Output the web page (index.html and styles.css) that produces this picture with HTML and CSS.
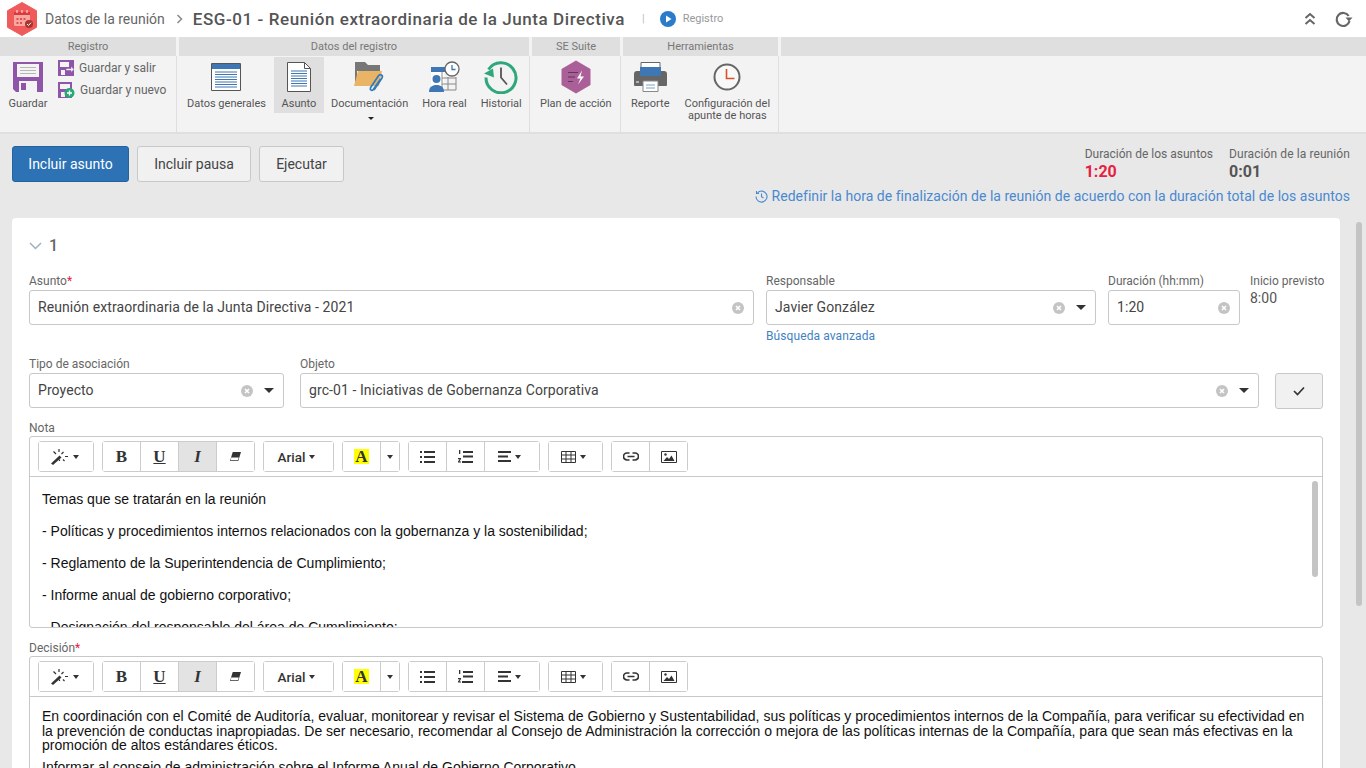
FILE: index.html
```html
<html>
<head>
    <meta charset="utf-8">
    <link rel="stylesheet" href="styles.css">
</head>
<body>
    <svg width="0" height="0" class="defs">
        <symbol id="clear" viewBox="0 0 12 12"><circle cx="6" cy="6" r="6" fill="#c4c4c4"/><path d="M4 4l4 4M8 4l-4 4" stroke="#fff" stroke-width="1.600"/></symbol>
        <symbol id="wand" viewBox="0 0 18 16"><path d="M0 14.500L8.500 6.500l2 2L2 16z" fill="#333"/><path d="M8 0v3M2.500 2.500L5 5M12.500 3L10.500 5M14 7.500h3M8.500 10.500V12M12 10.500l1.500 1.500" stroke="#333" stroke-width="1.200"/></symbol>
        <symbol id="eraser" viewBox="0 0 14 12"><path d="M4 1h9l-3 10H1z" fill="#333"/><path d="M2.400 7h8.200l-1 3H1.700z" fill="#fff"/></symbol>
        <symbol id="ul" viewBox="0 0 15 12"><path d="M0 0h2v2H0zM0 5h2v2H0zM0 10h2v2H0zM4 0h11v2H4zM4 5h11v2H4zM4 10h11v2H4z" fill="#333"/></symbol>
        <symbol id="ol" viewBox="0 0 15 13"><path d="M5 1h10v2H5zM5 5.500h10v2H5zM4 11h11v2H4z" fill="#333"/><path d="M1 0h1.300v4H1zM0 8h3v1L1.500 11.500H3V12.500H0v-1L1.600 9.200H0z" fill="#333"/></symbol>
        <symbol id="align" viewBox="0 0 13 11"><path d="M0 0h13v2H0zM0 4.500h10v2H0zM0 9h13v2H0z" fill="#333"/></symbol>
        <symbol id="table" viewBox="0 0 15 12"><path d="M.5.500h14v11H.5zM.5 4h14M.5 8h14M5 .5v11M10 .5v11" fill="none" stroke="#333"/></symbol>
        <symbol id="link" viewBox="0 0 16 9"><path d="M6.500 1H4a3.500 3.500 0 0 0 0 7h2.500M9.500 1H12a3.500 3.500 0 0 1 0 7H9.500M4.500 4.500h7" fill="none" stroke="#333" stroke-width="1.700"/></symbol>
        <symbol id="image" viewBox="0 0 16 12"><path d="M.5.500h15v11H.5z" fill="none" stroke="#333"/><path d="M2.500 10l3.500-4 2 2 2.500-3.500 3 5.500z" fill="#333"/><circle cx="4.500" cy="3.500" r="1.200" fill="#333"/></symbol>
    </svg>

    <header class="top-bar">
        <svg class="logo" width="30" height="34" viewBox="0 0 30 34">
            <path d="M15 .5l14.500 8.200v16.600L15 33.500.5 25.300V8.700z" fill="#ef5a5a" stroke="#ef5a5a" stroke-linejoin="round"/>
            <rect x="7" y="10" width="16" height="14" rx="1.500" fill="#f7a6a2"/>
            <path d="M7 10h16v3H7z" fill="#d93a3a"/>
            <path d="M10 8v3M15 8v3M20 8v3" stroke="#fbd5d2" stroke-width="1.200"/>
            <path d="M9.500 16h2v2h-2zM13 16h2v2h-2zM16.500 16h2v2h-2zM9.500 20h2v2h-2zM13 20h2v2h-2z" fill="#e2504e"/>
            <circle cx="22" cy="22" r="4" fill="#a8362f"/>
            <path d="M20 22l1.500 1.500 2.500-2.800" stroke="#fff" fill="none" stroke-width="1"/>
        </svg>
        <span class="crumb">Datos de la reunión</span>
        <svg class="crumb-sep" width="7" height="10" viewBox="0 0 7 10"><path d="M1.500 1l4 4-4 4" fill="none" stroke="#8a8a8a" stroke-width="1.500"/></svg>
        <h1 class="page-title">ESG-01 - Reunión extraordinaria de la Junta Directiva</h1>
        <span class="title-sep">|</span>
        <svg class="status-icon" width="16" height="16" viewBox="0 0 16 16"><circle cx="8" cy="8" r="8" fill="#2b7bcb"/><path d="M6 4.500l5.500 3.500L6 11.500z" fill="#fff"/></svg>
        <span class="status-text">Registro</span>
        <div class="top-actions">
            <svg width="12" height="14" viewBox="0 0 12 14"><path d="M1.500 6l4.500-4 4.500 4M1.500 12l4.500-4 4.500 4" fill="none" stroke="#666" stroke-width="2"/></svg>
            <svg width="19" height="18" viewBox="0 0 19 18"><path d="M15.500 11a6.500 6.500 0 1 1-.8-5" fill="none" stroke="#666" stroke-width="2.200"/><path d="M11.500 7.500h7L15 11.500z" fill="#666"/></svg>
        </div>
    </header>

    <nav class="ribbon">
        <section class="ribbon-group group-registro">
            <div class="group-title">Registro</div>
            <div class="group-body">
                <div class="ribbon-item item-save">
                    <svg width="30" height="30" viewBox="0 0 30 30"><path d="M0 0h30v30H3l-3-3z" fill="#8e55a8"/><path d="M4 2h22v13H4z" fill="#f3f3f3"/><path d="M7 5.500h16M7 8.500h16M7 11.500h16" stroke="#b8b8b8"/><path d="M6 19h18v11H6z" fill="#f3f3f3"/><path d="M8 21h5v7H8z" fill="#8e55a8"/></svg>
                    <span>Guardar</span>
                </div>
                <div class="save-links">
                    <div class="save-link">
                        <svg width="16" height="16" viewBox="0 0 16 16"><path d="M0 0h16v16H0z" fill="#8e55a8"/><path d="M2 2h9v5H2zM3 10h4v5H3z" fill="#f3f3f3"/><path d="M8 8.500h5V6l3 3.500-3 3V10.500H8z" fill="#f3f3f3" stroke="#8e55a8" stroke-width=".6"/></svg>
                        <span>Guardar y salir</span>
                    </div>
                    <div class="save-link">
                        <svg width="17" height="16" viewBox="0 0 17 16"><path d="M0 0h14v16H0z" fill="#8e55a8"/><path d="M2 2h10v5H2zM3 10h4v5H3z" fill="#f3f3f3"/><circle cx="11.500" cy="11" r="5" fill="#2aa876"/><path d="M9 11h5M11.500 8.500v5" stroke="#fff" stroke-width="1.300"/></svg>
                        <span>Guardar y nuevo</span>
                    </div>
                </div>
            </div>
        </section>

        <section class="ribbon-group group-datos">
            <div class="group-title">Datos del registro</div>
            <div class="group-body">
                <div class="ribbon-item">
                    <svg width="30" height="28" viewBox="0 0 30 28"><path d="M.5.500h29v27H.5z" fill="#fff" stroke="#555"/><path d="M1 1h28v5H1z" fill="#3f77b5"/><path d="M4 9h22M4 11.500h22M4 14h22M4 16.500h22M4 19h22M4 21.500h22M4 24h22" stroke="#3f77b5"/></svg>
                    <span>Datos generales</span>
                </div>
                <div class="ribbon-item is-active">
                    <svg width="24" height="30" viewBox="0 0 24 30"><path d="M.5.500h17l6 6v23H.5z" fill="#fff" stroke="#555"/><path d="M17.500.5v6h6" fill="none" stroke="#555"/><path d="M4 9h16M4 11.500h16M4 14h16M4 16.500h16M4 19h16M4 21.500h16M4 24h16" stroke="#3f77b5"/></svg>
                    <span>Asunto</span>
                </div>
                <div class="ribbon-item item-doc">
                    <svg width="32" height="30" viewBox="0 0 32 30"><path d="M1 0h10l3 3h12v6H1z" fill="#777"/><path d="M1 2v22h2V2z" fill="#777"/><path d="M4 9h24l-3 15H0z" fill="#e9b466"/><path d="M20 28l8-12c1.500-2.500-2-4.500-3.500-2.200l-8 12c-1 2 1.500 3.400 2.800 1.600l7.300-10.500" fill="none" stroke="#2f7bbf" stroke-width="1.700"/></svg>
                    <span>Documentación</span>
                    <i class="caret caret-dark item-caret"></i>
                </div>
                <div class="ribbon-item item-tight">
                    <svg width="32" height="32" viewBox="0 0 32 32"><path d="M3 6h13v23H3z" fill="#fff"/><path d="M3 6h16v5H3z" fill="#3f77b5"/><path d="M14 11v18M20 16v13M14 17h14M14 23h14M14 29h14M28 16v13" stroke="#888"/><circle cx="24" cy="8" r="7" fill="#fff" stroke="#666" stroke-width="1.300"/><path d="M24 4v4.500h3.500" fill="none" stroke="#3f77b5" stroke-width="1.300"/><circle cx="8.500" cy="18" r="4" fill="#3f77b5"/><path d="M1 31c0-5 3-7 7.500-7s7.500 2 7.500 7z" fill="#3f77b5"/></svg>
                    <span>Hora real</span>
                </div>
                <div class="ribbon-item item-tight">
                    <svg width="34" height="33" viewBox="0 0 34 33"><path d="M4.500 9A15 15 0 1 1 2 17" fill="none" stroke="#2ea87b" stroke-width="3"/><path d="M0 13l9-5 1 9z" fill="#2ea87b"/><path d="M17 7v10l6 7" fill="none" stroke="#555" stroke-width="1.800"/></svg>
                    <span>Historial</span>
                </div>
            </div>
        </section>

        <section class="ribbon-group group-suite">
            <div class="group-title">SE Suite</div>
            <div class="group-body">
                <div class="ribbon-item">
                    <svg width="30" height="33" viewBox="0 0 30 33"><path d="M15 0l14.500 8.500v16L15 33 .5 24.500v-16z" fill="#ab5f98"/><path d="M7 12h10M7 16.500h7M7 21h5" stroke="#5d3a57" stroke-width="1.200"/><path d="M21 10l-5 8h3.500l-2.500 6 6-8h-3.500z" fill="#fff"/></svg>
                    <span>Plan de acción</span>
                </div>
            </div>
        </section>

        <section class="ribbon-group group-tools">
            <div class="group-title">Herramientas</div>
            <div class="group-body">
                <div class="ribbon-item item-report">
                    <svg width="33" height="30" viewBox="0 0 33 30"><path d="M7 .5h19v7H7z" fill="#fff" stroke="#666"/><path d="M0 12q0-3 3-3h27q3 0 3 3v11q0 1-1 1h-31q-1 0-1-1z" fill="#666"/><path d="M6 5h21v9H6z" fill="#3f77b5"/><path d="M9 19h15v10.500H9z" fill="#fff" stroke="#888"/><path d="M12 23h9M12 26h9" stroke="#7ba2cc"/><path d="M2 20h3" stroke="#fff"/></svg>
                    <span>Reporte</span>
                </div>
                <div class="ribbon-item item-config">
                    <svg width="28" height="28" viewBox="0 0 28 28"><circle cx="14" cy="14" r="12.500" fill="#f8f8f8" stroke="#666" stroke-width="2"/><path d="M13.500 6v9.500h8" fill="none" stroke="#d9512c" stroke-width="1.600"/></svg>
                    <span>Configuración del<br>apunte de horas</span>
                </div>
            </div>
        </section>

        <section class="ribbon-group group-rest">
            <div class="group-title"></div>
            <div class="group-body"></div>
        </section>
    </nav>

    <main class="content">
        <div class="action-bar">
            <div class="action-buttons">
                <button class="btn btn-primary">Incluir asunto</button>
                <button class="btn btn-pause">Incluir pausa</button>
                <button class="btn btn-run">Ejecutar</button>
            </div>
            <div class="summary">
                <div class="durations">
                    <div class="duration">
                        <span class="duration-label">Duración de los asuntos</span>
                        <strong class="duration-value is-over">1:20</strong>
                    </div>
                    <div class="duration">
                        <span class="duration-label">Duración de la reunión</span>
                        <strong class="duration-value">0:01</strong>
                    </div>
                </div>
                <a class="reset-link">
                    <svg width="13" height="13" viewBox="0 0 13 13"><path d="M2.500 2.800A5.500 5.500 0 1 1 1 6.500" fill="none" stroke="#4a88d0" stroke-width="1.100"/><path d="M1.500 1v2.500H4M6.500 3.500v3.300l2 1.200" fill="none" stroke="#4a88d0" stroke-width="1.100"/></svg>
                    Redefinir la hora de finalización de la reunión de acuerdo con la duración total de los asuntos
                </a>
            </div>
        </div>

        <div class="card">
            <div class="card-head">
                <svg width="13" height="8" viewBox="0 0 13 8"><path d="M1 1l5.500 5.500L12 1" fill="none" stroke="#9fb0bf" stroke-width="1.500"/></svg>
                <span>1</span>
            </div>

            <div class="form-row row-subject">
                <div class="field field-grow">
                    <label>Asunto<em>*</em></label>
                    <div class="input">
                        <span class="input-text">Reunión extraordinaria de la Junta Directiva - 2021</span>
                        <svg class="clear"><use href="#clear"/></svg>
                    </div>
                </div>
                <div class="field field-owner">
                    <label>Responsable</label>
                    <div class="input">
                        <span class="input-text">Javier González</span>
                        <svg class="clear"><use href="#clear"/></svg>
                        <i class="caret caret-select"></i>
                    </div>
                    <a class="field-link">Búsqueda avanzada</a>
                </div>
                <div class="field field-time">
                    <label>Duración (hh:mm)</label>
                    <div class="input">
                        <span class="input-text">1:20</span>
                        <svg class="clear"><use href="#clear"/></svg>
                    </div>
                </div>
                <div class="field field-start">
                    <label>Inicio previsto</label>
                    <span class="start-value">8:00</span>
                </div>
            </div>

            <div class="form-row row-object">
                <div class="field field-type">
                    <label>Tipo de asociación</label>
                    <div class="input">
                        <span class="input-text">Proyecto</span>
                        <svg class="clear"><use href="#clear"/></svg>
                        <i class="caret caret-select"></i>
                    </div>
                </div>
                <div class="field field-grow">
                    <label>Objeto</label>
                    <div class="input">
                        <span class="input-text">grc-01 - Iniciativas de Gobernanza Corporativa</span>
                        <svg class="clear"><use href="#clear"/></svg>
                        <i class="caret caret-select"></i>
                    </div>
                </div>
                <button class="btn btn-check">
                    <svg width="12" height="10" viewBox="0 0 12 10"><path d="M1 5l3.500 3.500L11 1.500" fill="none" stroke="#333" stroke-width="1.700"/></svg>
                </button>
            </div>

            <div class="field field-editor">
                <label>Nota</label>
                <div class="editor editor-note">
                    <div class="editor-toolbar">
                        <div class="tool-group"><button class="tool tool-style"><svg width="18" height="16"><use href="#wand"/></svg><i class="caret"></i></button></div>
                        <div class="tool-group">
                            <button class="tool tool-b">B</button><button class="tool tool-u">U</button><button class="tool tool-i is-on">I</button><button class="tool"><svg width="13" height="11"><use href="#eraser"/></svg></button>
                        </div>
                        <div class="tool-group"><button class="tool tool-font">Arial<i class="caret"></i></button></div>
                        <div class="tool-group">
                            <button class="tool"><span class="color-a">A</span></button><button class="tool tool-narrow"><i class="caret"></i></button>
                        </div>
                        <div class="tool-group">
                            <button class="tool"><svg width="15" height="12"><use href="#ul"/></svg></button><button class="tool"><svg width="15" height="13"><use href="#ol"/></svg></button><button class="tool tool-wide"><svg width="13" height="11"><use href="#align"/></svg><i class="caret"></i></button>
                        </div>
                        <div class="tool-group"><button class="tool tool-table"><svg width="15" height="12"><use href="#table"/></svg><i class="caret"></i></button></div>
                        <div class="tool-group">
                            <button class="tool"><svg width="16" height="9"><use href="#link"/></svg></button><button class="tool"><svg width="16" height="12"><use href="#image"/></svg></button>
                        </div>
                    </div>
                    <div class="editor-body">
                        <p>Temas que se tratarán en la reunión</p>
                        <p>- Políticas y procedimientos internos relacionados con la gobernanza y la sostenibilidad;</p>
                        <p>- Reglamento de la Superintendencia de Cumplimiento;</p>
                        <p>- Informe anual de gobierno corporativo;</p>
                        <p>- Designación del responsable del área de Cumplimiento;</p>
                        <div class="editor-scroll"></div>
                    </div>
                </div>
            </div>

            <div class="field field-editor">
                <label>Decisión<em>*</em></label>
                <div class="editor">
                    <div class="editor-toolbar">
                        <div class="tool-group"><button class="tool tool-style"><svg width="18" height="16"><use href="#wand"/></svg><i class="caret"></i></button></div>
                        <div class="tool-group">
                            <button class="tool tool-b">B</button><button class="tool tool-u">U</button><button class="tool tool-i is-on">I</button><button class="tool"><svg width="13" height="11"><use href="#eraser"/></svg></button>
                        </div>
                        <div class="tool-group"><button class="tool tool-font">Arial<i class="caret"></i></button></div>
                        <div class="tool-group">
                            <button class="tool"><span class="color-a">A</span></button><button class="tool tool-narrow"><i class="caret"></i></button>
                        </div>
                        <div class="tool-group">
                            <button class="tool"><svg width="15" height="12"><use href="#ul"/></svg></button><button class="tool"><svg width="15" height="13"><use href="#ol"/></svg></button><button class="tool tool-wide"><svg width="13" height="11"><use href="#align"/></svg><i class="caret"></i></button>
                        </div>
                        <div class="tool-group"><button class="tool tool-table"><svg width="15" height="12"><use href="#table"/></svg><i class="caret"></i></button></div>
                        <div class="tool-group">
                            <button class="tool"><svg width="16" height="9"><use href="#link"/></svg></button><button class="tool"><svg width="16" height="12"><use href="#image"/></svg></button>
                        </div>
                    </div>
                    <div class="editor-body editor-decision">
                        <p>En coordinación con el Comité de Auditoría, evaluar, monitorear y revisar el Sistema de Gobierno y Sustentabilidad, sus políticas y procedimientos internos de la Compañía, para verificar su efectividad en la prevención de conductas inapropiadas. De ser necesario, recomendar al Consejo de Administración la corrección o mejora de las políticas internas de la Compañía, para que sean más efectivas en la promoción de altos estándares éticos.</p>
                        <p>Informar al consejo de administración sobre el Informe Anual de Gobierno Corporativo.</p>
                    </div>
                </div>
            </div>
        </div>

        <div class="page-scroll"></div>
    </main>
</body>
</html>
```

FILE: styles.css
```css
* {
    box-sizing: border-box;
}

html, body {
    height: 768px;
    overflow: hidden;
}

body {
    margin: 0;
    display: flex;
    flex-direction: column;
    font-family: Roboto, "Liberation Sans", sans-serif;
    font-size: 14px;
    color: #333;
    background: #e8e8e8;
}

.defs {
    position: absolute;
}

/* top bar */
.top-bar {
    display: flex;
    align-items: center;
    height: 37px;
    padding: 0 13px 0 7px;
    background: #fff;
    flex: none;
}

.logo {
    margin-right: 8px;
}

.crumb {
    font-size: 14px;
    color: #666;
}

.crumb-sep {
    margin: 0 10px 0 11px;
}

.page-title {
    margin: 0;
    font-size: 17px;
    font-weight: 500;
    letter-spacing: .57px;
    color: #555;
    white-space: nowrap;
}

.title-sep {
    margin: 0 15px 0 17px;
    font-size: 11px;
    color: #bbb;
}

.status-icon {
    margin-right: 7px;
}

.status-text {
    font-size: 11px;
    color: #999;
}

.top-actions {
    margin-left: auto;
    display: flex;
    align-items: center;
    gap: 18px;
}

/* ribbon */
.ribbon {
    display: flex;
    height: 97px;
    background: #f3f3f3;
    border-bottom: 2px solid #dfdfdf;
    flex: none;
}

.ribbon-group {
    display: flex;
    flex-direction: column;
}

.group-registro { width: 179px; }
.group-datos { width: 353px; }
.group-suite { width: 91px; }
.group-tools { width: 158px; }
.group-rest { flex: 1; }

.group-title {
    height: 19px;
    line-height: 19px;
    margin-right: 3px;
    font-size: 11px;
    text-align: center;
    color: #777;
    background: #dfdfdf;
    flex: none;
}

.group-rest .group-title {
    margin-right: 0;
}

.group-body {
    display: flex;
    flex: 1;
    margin-right: 2px;
    padding-top: 1px;
    border-right: 1px solid #dfdfdf;
}

.group-rest .group-body {
    border-right: 0;
}

.ribbon-item {
    position: relative;
    display: flex;
    flex-direction: column;
    align-items: center;
    height: 56px;
    padding: 0 8px;
    font-size: 11px;
    line-height: 12px;
    color: #555;
    text-align: center;
    white-space: nowrap;
}

.ribbon-item svg {
    height: 34px;
    flex: none;
    margin: 3px 0 4px;
}

.ribbon-item.is-active {
    background: #dfdfdf;
    width: 50px;
}

.item-save {
    padding: 0 7px;
    width: 56px;
}

.item-doc {
    padding: 0 7px;
}

.item-tight {
    padding: 0 7px;
}

.item-caret {
    position: absolute;
    left: 50%;
    bottom: -7px;
    margin-left: -2px;
}

.item-report {
    padding: 0 10px 0 8px;
}

.item-config {
    padding: 0 5px;
}

.save-links {
    display: flex;
    flex-direction: column;
    gap: 6px;
    padding: 3px 0 0 2px;
}

.save-link {
    display: flex;
    align-items: center;
    gap: 5px;
    height: 16px;
    font-size: 12px;
    color: #666;
    white-space: nowrap;
}

/* main */
.content {
    position: relative;
    flex: 1;
    padding: 12px 16px 0 12px;
    overflow: hidden;
}

.action-bar {
    display: flex;
    justify-content: space-between;
    height: 72px;
}

.action-buttons {
    display: flex;
    gap: 8px;
    align-items: flex-start;
}

.btn {
    height: 36px;
    padding: 0;
    font-family: inherit;
    font-size: 14px;
    color: #444;
    background: #f1f1f1;
    border: 1px solid #c8c8c8;
    border-radius: 3px;
}

.btn-primary {
    width: 117px;
    color: #fff;
    background: #2c72b5;
    border-color: #24639f;
}

.btn-pause { width: 114px; }
.btn-run { width: 85px; }

.summary {
    display: flex;
    flex-direction: column;
    align-items: flex-end;
}

.durations {
    display: flex;
    gap: 16px;
}

.duration {
    display: flex;
    flex-direction: column;
}

.duration-label {
    font-size: 12px;
    line-height: 16px;
    color: #666;
}

.duration + .duration .duration-label {
    letter-spacing: .09px;
}

.duration-value {
    font-size: 16px;
    line-height: 19px;
    color: #555;
}

.duration-value.is-over {
    color: #e8203f;
}

.reset-link {
    display: flex;
    align-items: center;
    gap: 4px;
    margin-top: 7px;
    font-size: 14px;
    letter-spacing: .03px;
    color: #4a88d0;
    white-space: nowrap;
}

/* card */
.card {
    width: 1328px;
    padding: 0 17px;
    background: #fff;
    border-radius: 4px 4px 0 0;
}

.card-head {
    display: flex;
    align-items: center;
    gap: 7px;
    height: 55px;
    font-size: 16px;
    font-weight: 500;
    color: #666;
}

.form-row {
    display: flex;
    align-items: flex-start;
}

.row-subject {
    gap: 12px;
    height: 83px;
}

.row-object {
    gap: 16px;
    height: 67px;
}

.field {
    display: flex;
    flex-direction: column;
}

.field label {
    height: 17px;
    font-size: 12px;
    line-height: 17px;
    color: #666;
    white-space: nowrap;
}

.field label em {
    font-style: normal;
    color: #e8203f;
}

.field-grow { flex: 1; }
.field-owner { width: 330px; }
.field-time { width: 132px; }
.field-start { width: 73px; margin-left: -2px; }
.field-type { width: 255px; }

.input {
    display: flex;
    align-items: center;
    height: 35px;
    padding: 0 9px 0 8px;
    background: #fff;
    border: 1px solid #c8c8c8;
    border-radius: 3px;
}

.input-text {
    flex: 1;
    padding-bottom: 2px;
    font-size: 14px;
    letter-spacing: .08px;
    color: #444;
    white-space: nowrap;
}

.clear {
    width: 12px;
    height: 12px;
    flex: none;
}

.caret {
    display: inline-block;
    border-style: solid;
    border-width: 4px 3.500px 0;
    border-color: #333 transparent transparent;
}

.caret-dark {
    border-width: 3px 3px 0;
    border-color: #222 transparent transparent;
}

.caret-select {
    margin-left: 11px;
    border-width: 5px 5px 0;
}

.start-value {
    font-size: 14px;
    line-height: 16px;
    color: #555;
}

.field-link {
    margin-top: 4px;
    font-size: 12px;
    line-height: 15px;
    letter-spacing: .1px;
    color: #3f82c4;
}

.btn-check {
    width: 48px;
    margin-top: 17px;
}

/* editors */
.field-editor {
    margin-bottom: 15px;
}

.field-editor label {
    height: 11px;
    line-height: 11px;
    margin-bottom: 2px;
}

.editor {
    border: 1px solid #c8c8c8;
    border-radius: 3px;
}

.editor-note {
    height: 192px;
    overflow: hidden;
}

.editor-toolbar {
    display: flex;
    gap: 8px;
    height: 40px;
    padding: 4px 8px 0;
    border-bottom: 1px solid #c8c8c8;
}

.tool-group {
    display: flex;
    height: 31px;
    border: 1px solid #ccc;
    border-radius: 3px;
}

.tool {
    display: flex;
    align-items: center;
    justify-content: center;
    gap: 4px;
    width: 37px;
    padding: 0;
    font-family: "Liberation Serif", serif;
    font-size: 17px;
    font-weight: 700;
    color: #333;
    background: #fff;
    border: 0;
}

.tool + .tool {
    width: 38px;
    border-left: 1px solid #ccc;
}

.tool.is-on {
    background: #e3e3e3;
}

.tool-style { width: 54px; padding-right: 3px; }
.tool + .tool-narrow { width: 19px; }
.tool + .tool-wide { width: 55px; padding-right: 6px; }
.tool-table { width: 53px; padding-right: 5px; }

.tool-u {
    text-decoration: underline;
}

.tool-i {
    font-style: italic;
}

.tool-font {
    width: 69px;
    padding-right: 4px;
    font-family: Roboto, sans-serif;
    font-size: 13.500px;
    font-weight: 500;
}

.color-a {
    padding: 0 1px;
    line-height: 15px;
    background: #ff0;
}

.editor-body {
    position: relative;
    padding: 14px 12px 0;
    font-family: "Liberation Sans", Arial, sans-serif;
    font-size: 14px;
    line-height: 16px;
    color: #111;
}

.editor-body p {
    margin: 0 0 16px;
}

.editor-decision {
    min-height: 200px;
    padding: 12px 17px 0 12px;
    line-height: 14.500px;
}

.editor-decision p {
    margin-bottom: 7px;
}

.editor-scroll {
    position: absolute;
    top: 4px;
    right: 4px;
    width: 6px;
    height: 96px;
    background: #c4c4c4;
    border-radius: 3px;
}

.page-scroll {
    position: absolute;
    top: 88px;
    right: 4px;
    width: 6px;
    height: 384px;
    background: #c4c4c4;
    border-radius: 3px;
}
```
